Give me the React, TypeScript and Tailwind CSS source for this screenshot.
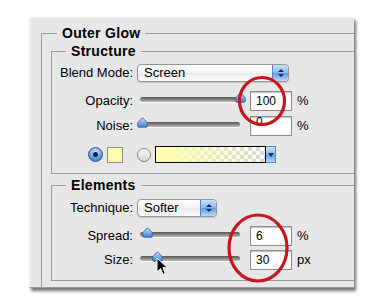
import React from "react";

function Thumb({ left }: { left: number }) {
  return (
    <svg
      className="absolute top-[1px]"
      style={{ left }}
      width="11"
      height="11"
      viewBox="0 0 11 11"
    >
      <defs>
        <linearGradient id="thumbG" x1="0" y1="0" x2="0" y2="1">
          <stop offset="0" stopColor="#d4e8ff" />
          <stop offset="0.5" stopColor="#7fb0ec" />
          <stop offset="1" stopColor="#3d7fd6" />
        </linearGradient>
      </defs>
      <path
        d="M5.5 0.8 L10.2 5.6 L10.2 9.2 Q10.2 10.2 9.2 10.2 L1.8 10.2 Q0.8 10.2 0.8 9.2 L0.8 5.6 Z"
        fill="url(#thumbG)"
        stroke="#35609e"
        strokeWidth="0.9"
      />
    </svg>
  );
}

function Slider({ at }: { at: number }) {
  return (
    <div className="relative w-[113px] h-[20px] shrink-0">
      <div className="absolute left-[3px] top-[6px] w-[100px] h-[5px] rounded-full bg-[linear-gradient(#555,#858585_50%,#c0c0c0)] shadow-[0_1px_0_rgba(255,255,255,0.7)]" />
      <Thumb left={at} />
    </div>
  );
}

function Field({ value, shift = 0 }: { value: string; shift?: number }) {
  return (
    <div className="w-[42px] h-[20px] shrink-0 overflow-hidden bg-white border border-[#8c8c8c] shadow-[inset_0_1px_1px_rgba(0,0,0,0.25)] pl-[5px] text-[12px] leading-[18px] text-black">
      <span className="relative block" style={{ top: shift }}>
        {value}
      </span>
    </div>
  );
}

function Stepper() {
  return (
    <div className="w-[16px] h-full shrink-0 rounded-r-[4px] border-l border-[#5d84bd] bg-[linear-gradient(#c7e1fc,#86b8f0_50%,#5a9be6_51%,#b4d7fb)] flex flex-col items-center justify-center gap-[2px]">
      <svg width="6" height="3" viewBox="0 0 6 3">
        <path d="M3 0 L6 3 L0 3 Z" fill="#1d2d4a" />
      </svg>
      <svg width="6" height="3" viewBox="0 0 6 3">
        <path d="M0 0 L6 0 L3 3 Z" fill="#1d2d4a" />
      </svg>
    </div>
  );
}

function Popup({ text, width }: { text: string; width: string }) {
  return (
    <div
      className={`${width} h-[18px] shrink-0 flex items-stretch rounded-[4px] border border-[#959595] bg-[linear-gradient(#ffffff,#f4f4f4_50%,#e9e9e9_51%,#fbfbfb)] shadow-[0_1px_1px_rgba(0,0,0,0.15)]`}
    >
      <span className="flex-1 pl-[6px] text-[13px] leading-[16px] text-black">{text}</span>
      <Stepper />
    </div>
  );
}

function Label({ children }: { children: React.ReactNode }) {
  return <span className="w-[81px] shrink-0 text-right text-[13px] text-black">{children}</span>;
}

function Row({ children, className = "" }: { children: React.ReactNode; className?: string }) {
  return <div className={`flex items-center h-[20px] ${className}`}>{children}</div>;
}

export default function App() {
  return (
    <div className="relative w-[382px] h-[303px] overflow-hidden bg-white pt-[17px] pl-[29px] font-['Liberation_Sans',Arial,sans-serif]">
      <div className="w-[325px] h-[271px] overflow-hidden bg-[#e7e7e7] border-t border-l border-[#f4f4f4] border-b border-b-[#9a9a9a] shadow-[2px_3px_3px_rgba(0,0,0,0.55)] pt-[8px] pl-[11px]">
        <fieldset className="w-[340px] h-[300px] border-t border-l border-[#9b9b9b]">
          <legend className="ml-[15px] px-[5px] text-[14px] font-bold tracking-[0.3px] leading-[14px] text-black">Outer Glow</legend>

          <fieldset className="mt-[4px] ml-[9px] w-[320px] border-t border-l border-b border-[#9b9b9b] pt-[5px] pb-[10px]">
            <legend className="ml-[14px] px-[5px] text-[14px] font-bold tracking-[0.3px] leading-[14px] text-black">Structure</legend>
            <Row>
              <Label>Blend Mode:</Label>
              <div className="ml-[4px]">
                <Popup text="Screen" width="w-[152px]" />
              </div>
            </Row>
            <Row className="mt-[8px]">
              <Label>Opacity:</Label>
              <div className="ml-[4px] flex items-center">
                <Slider at={98} />
                <Field value="100" />
                <span className="ml-[5px] text-[13px] text-black">%</span>
              </div>
            </Row>
            <Row className="mt-[5px]">
              <Label>Noise:</Label>
              <div className="ml-[4px] flex items-center">
                <Slider at={0} />
                <Field value="0" shift={-4} />
                <span className="ml-[5px] text-[13px] text-black">%</span>
              </div>
            </Row>
            <div className="mt-[10px] h-[17px] flex items-center pl-[36px]">
              <div className="w-[15px] h-[15px] rounded-full border border-[#34598f] bg-[radial-gradient(circle_at_50%_30%,#cfe6ff,#4a8de0_70%,#2f6cc0)] flex items-center justify-center">
                <div className="w-[5px] h-[5px] rounded-full bg-[#14213a]" />
              </div>
              <div className="ml-[4px] w-[16px] h-[16px] border border-[#8e8e8e] bg-[#fdfbb2]" />
              <div className="ml-[14px] w-[14px] h-[14px] rounded-full border border-[#8a8a8a] bg-[linear-gradient(#fdfdfd,#d2d2d2)]" />
              <div className="ml-[4px] w-[111px] h-[17px] border border-black bg-[conic-gradient(#d6d6d6_25%,#ffffff_0_50%,#d6d6d6_0_75%,#ffffff_0)] bg-[length:8px_8px]">
                <div className="w-full h-full bg-[linear-gradient(to_right,#fdfbb2,#fdfbb2_10%,rgba(253,251,178,0))]" />
              </div>
              <div className="w-[10px] h-[17px] border border-l-0 border-[#5d84bd] bg-[linear-gradient(#c7e1fc,#86b8f0_50%,#5a9be6_51%,#b4d7fb)] flex items-center justify-center">
                <svg width="6" height="4" viewBox="0 0 6 4">
                  <path d="M0 0 L6 0 L3 4 Z" fill="#1d2d4a" />
                </svg>
              </div>
            </div>
          </fieldset>

          <fieldset className="mt-[4px] ml-[9px] w-[320px] border-t border-l border-b border-[#9b9b9b] pt-[6px] pb-[10px]">
            <legend className="ml-[14px] px-[5px] text-[14px] font-bold tracking-[0.3px] leading-[14px] text-black">Elements</legend>
            <Row>
              <Label>Technique:</Label>
              <div className="ml-[4px]">
                <Popup text="Softer" width="w-[80px]" />
              </div>
            </Row>
            <Row className="mt-[8px]">
              <Label>Spread:</Label>
              <div className="ml-[4px] flex items-center">
                <Slider at={5} />
                <Field value="6" />
                <span className="ml-[5px] text-[13px] text-black">%</span>
              </div>
            </Row>
            <Row className="mt-[4px]">
              <Label>Size:</Label>
              <div className="ml-[4px] flex items-center">
                <Slider at={15} />
                <Field value="30" />
                <span className="ml-[5px] text-[13px] text-black">px</span>
              </div>
            </Row>
          </fieldset>
        </fieldset>
      </div>

      {/* annotation ellipses */}
      <svg className="absolute left-0 top-0 pointer-events-none" width="382" height="303" viewBox="0 0 382 303">
        <ellipse cx="262" cy="101" rx="22.5" ry="23.5" fill="none" stroke="#c8161f" strokeWidth="3.2" />
        <ellipse cx="258" cy="248" rx="29" ry="33" fill="none" stroke="#c8161f" strokeWidth="3.2" />
      </svg>

      {/* mouse pointer */}
      <svg className="absolute left-[156px] top-[257px]" width="12" height="19" viewBox="0 0 12 19">
        <path
          d="M1 1 L1 15 L4.5 11.6 L7 17.5 L9.3 16.5 L6.9 10.8 L11.5 10.8 Z"
          fill="#000"
          stroke="#fff"
          strokeWidth="1"
          strokeLinejoin="round"
        />
      </svg>
    </div>
  );
}
